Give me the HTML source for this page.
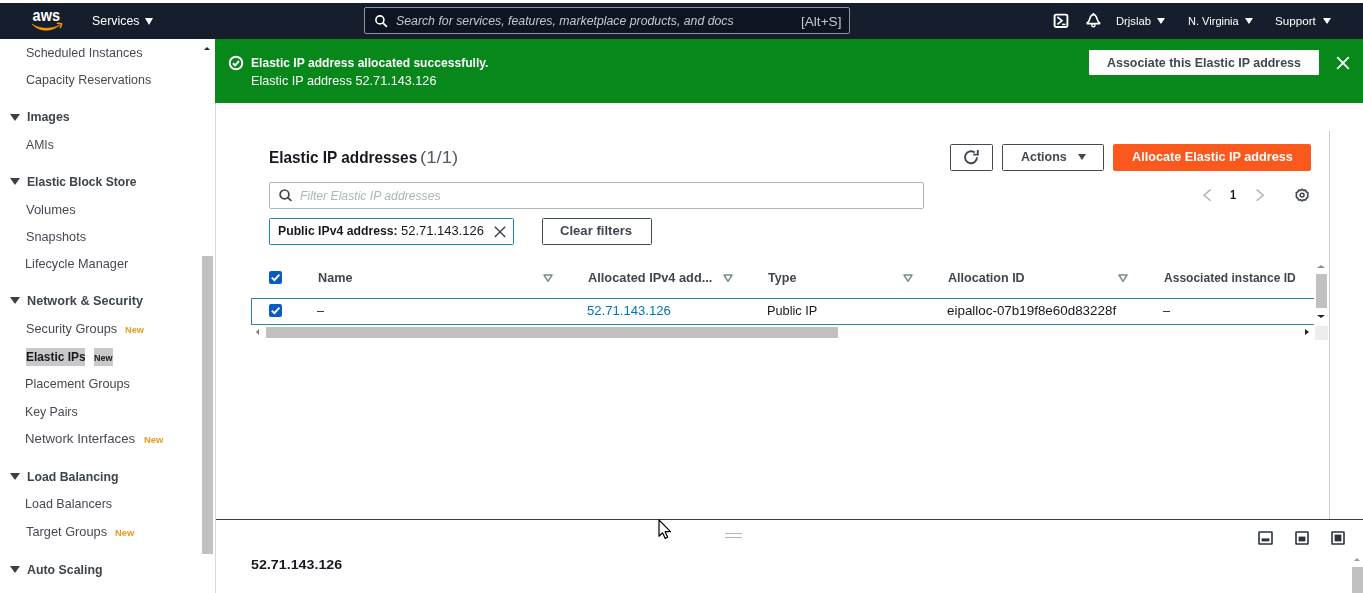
<!DOCTYPE html>
<html lang="en">
<head>
<meta charset="utf-8">
<title>Elastic IP addresses | EC2 Management Console</title>
<style>
*{box-sizing:border-box;margin:0;padding:0}
html,body{width:1363px;height:593px;overflow:hidden;background:#fff}
body{position:relative;font-family:"Liberation Sans",sans-serif;font-size:13px;color:#16191f}
.a{position:absolute}
.t{position:absolute;white-space:nowrap;line-height:16px;transform-origin:0 50%;z-index:5}
.tri{position:absolute;width:0;height:0;border-style:solid;border-color:transparent}
.btn{position:absolute;border:1px solid #434a54;border-radius:1.5px;background:#fff}
.cb{position:absolute;width:13px;height:13px;border-radius:2px;background:#0a5cc0}
.sort{position:absolute}
</style>
</head>
<body>
<!-- ===== top navigation ===== -->
<div class="a" style="left:0;top:3px;width:1363px;height:36.3px;background:#161e2d"></div>
<svg class="a" style="left:30px;top:9px" width="36" height="24" viewBox="0 0 36 24">
  <text x="2.6" y="11.8" font-family="Liberation Sans, sans-serif" font-size="16.5" font-weight="bold" fill="#fff" textLength="27.4" lengthAdjust="spacingAndGlyphs">aws</text>
  <path d="M2.2 15.2 C9.5 20.2 21 20.6 29.8 16 C21.4 23.2 9.2 23 2.2 15.2 Z" fill="#f90" stroke="#f90" stroke-width="0.6" stroke-linejoin="round"/>
  <path d="M27.4 14.3 L31.6 14.7 L30.4 18.6" fill="none" stroke="#f90" stroke-width="1.5" stroke-linejoin="round" stroke-linecap="round"/>
</svg>
<div class="tri" style="left:144.5px;top:17.8px;border-width:7.8px 4.7px 0 4.7px;border-top-color:#fff"></div>
<div class="a" style="left:364px;top:7px;width:486px;height:27px;border:1px solid #8d949e;border-radius:2px;background:#0e1421"></div>
<svg class="a" style="left:373.5px;top:13.5px" width="15" height="15" viewBox="0 0 15 15"><circle cx="5.9" cy="5.9" r="4" fill="none" stroke="#fff" stroke-width="1.6"/><path d="M8.9 8.9 L12.4 12.4" stroke="#fff" stroke-width="1.8" stroke-linecap="round"/></svg>
<svg class="a" style="left:1053px;top:12.6px" width="16" height="16" viewBox="0 0 16 16"><rect x="1.6" y="1.6" width="12.8" height="12.4" rx="1.5" fill="none" stroke="#fff" stroke-width="1.9"/><path d="M4.4 4 L9 7.7 L4.4 11.4" fill="none" stroke="#fff" stroke-width="1.7"/><path d="M9 11.4 H12.6" stroke="#fff" stroke-width="1.5"/></svg>
<svg class="a" style="left:1085px;top:12.2px" width="17" height="17" viewBox="0 0 17 17"><path d="M2.2 11 C4.6 9.4 4.6 7 5.4 5 C6 3.4 7.2 2.6 8.4 2.6 C9.6 2.6 10.8 3.4 11.4 5 C12.2 7 12.2 9.4 14.6 11 L14.6 11.6 H2.2 Z" fill="none" stroke="#fff" stroke-width="1.7" stroke-linejoin="round"/><path d="M8.4 1 V2.6" stroke="#fff" stroke-width="1.7"/><circle cx="8.4" cy="13.2" r="1.6" fill="none" stroke="#fff" stroke-width="1.4"/></svg>
<div class="tri" style="left:1156.6px;top:17.8px;border-width:6.4px 4.3px 0 4.3px;border-top-color:#fff"></div>
<div class="tri" style="left:1244.5px;top:17.8px;border-width:6.4px 4.3px 0 4.3px;border-top-color:#fff"></div>
<div class="tri" style="left:1322.8px;top:17.8px;border-width:6.4px 4.3px 0 4.3px;border-top-color:#fff"></div>

<!-- ===== sidebar ===== -->
<div class="a" style="left:0;top:39.3px;width:216px;height:554px;background:#fff;border-right:1px solid #d5dbdb"></div>
<div class="tri" style="left:9.5px;top:113.7px;border-width:7.8px 5.2px 0 5.2px;border-top-color:#3a4048"></div>
<div class="tri" style="left:9.5px;top:178.3px;border-width:7.8px 5.2px 0 5.2px;border-top-color:#3a4048"></div>
<div class="tri" style="left:9.5px;top:297.1px;border-width:7.8px 5.2px 0 5.2px;border-top-color:#3a4048"></div>
<div class="tri" style="left:9.5px;top:473.3px;border-width:7.8px 5.2px 0 5.2px;border-top-color:#3a4048"></div>
<div class="tri" style="left:9.5px;top:566.1px;border-width:7.8px 5.2px 0 5.2px;border-top-color:#3a4048"></div>
<div class="a" style="left:25.5px;top:348.3px;width:59.5px;height:18.2px;background:#c8c8c8"></div>
<div class="a" style="left:93.8px;top:348.3px;width:19.2px;height:18.2px;background:#c8c8c8"></div>
<div class="tri" style="left:203.8px;top:46.8px;border-width:0 3.6px 3.4px 3.6px;border-bottom-color:#222"></div>
<div class="a" style="left:202px;top:256px;width:10.6px;height:297.6px;background:#c1c1c1"></div>

<!-- ===== flash banner ===== -->
<div class="a" style="left:215px;top:39.3px;width:1148px;height:64px;background:#08881a"></div>
<svg class="a" style="left:228px;top:54.6px" width="16" height="16" viewBox="0 0 16 16"><circle cx="8" cy="8" r="6.3" fill="none" stroke="#fff" stroke-width="1.9"/><path d="M4.9 8.3 L7.1 10.4 L11 6" fill="none" stroke="#fff" stroke-width="1.9"/></svg>
<div class="a" style="left:1088.7px;top:49.8px;width:230.3px;height:25.4px;background:#fff;border-radius:1px"></div>
<svg class="a" style="left:1335.5px;top:56px" width="14" height="14" viewBox="0 0 14 14"><path d="M1.2 1.2 L12.8 12.8 M12.8 1.2 L1.2 12.8" stroke="#fff" stroke-width="1.8"/></svg>

<!-- ===== main content ===== -->
<div class="a" style="left:1329px;top:131px;width:1px;height:389px;background:#c9cccc"></div>
<!-- header buttons -->
<div class="btn" style="left:950px;top:144px;width:43px;height:27px"></div>
<svg class="a" style="left:963px;top:148.6px" width="17" height="16" viewBox="0 0 17 16"><path d="M14 8.2 A6 6 0 1 1 11.8 3.6" fill="none" stroke="#414750" stroke-width="1.9"/><path d="M14.8 1 V5.6 H10.2" fill="none" stroke="#414750" stroke-width="1.9" stroke-linejoin="miter"/></svg>
<div class="btn" style="left:1002px;top:144px;width:102px;height:27px"></div>
<div class="tri" style="left:1077.5px;top:153.6px;border-width:6.8px 4.6px 0 4.6px;border-top-color:#414750"></div>
<div class="a" style="left:1113px;top:144px;width:198.2px;height:26.6px;background:#fb581e;border-radius:2px"></div>
<!-- filter input -->
<div class="a" style="left:269px;top:182px;width:655px;height:27px;border:1px solid #aab7b8;border-radius:2px;background:#fff"></div>
<svg class="a" style="left:278px;top:188px" width="15" height="15" viewBox="0 0 15 15"><circle cx="6.5" cy="6.4" r="4.4" fill="none" stroke="#414750" stroke-width="1.7"/><path d="M9.7 9.6 L12.9 12.4" stroke="#414750" stroke-width="1.8" stroke-linecap="round"/></svg>
<!-- pagination -->
<svg class="a" style="left:1202px;top:188px" width="12" height="15" viewBox="0 0 12 15"><path d="M8.6 1.6 L2 7.2 L8.6 12.8" fill="none" stroke="#aab7b8" stroke-width="1.5"/></svg>
<svg class="a" style="left:1254px;top:188px" width="12" height="15" viewBox="0 0 12 15"><path d="M2.6 1.6 L9.2 7.2 L2.6 12.8" fill="none" stroke="#aab7b8" stroke-width="1.5"/></svg>
<svg class="a" style="left:1295px;top:188px" width="14.2" height="14.2" viewBox="0 0 16 16"><path d="M8 1.4 L9.6 2.7 L11.8 2.4 L12.7 4.3 L14.6 5.3 L14.2 7.4 L14.6 8.6 L14.2 10.7 L12.7 11.7 L11.8 13.6 L9.6 13.3 L8 14.6 L6.4 13.3 L4.2 13.6 L3.3 11.7 L1.8 10.7 L1.4 8.6 L1.8 7.4 L1.4 5.3 L3.3 4.3 L4.2 2.4 L6.4 2.7 Z" fill="none" stroke="#414750" stroke-width="1.8" stroke-linejoin="round"/><circle cx="8" cy="8" r="2.2" fill="none" stroke="#414750" stroke-width="1.7"/></svg>
<!-- token -->
<div class="a" style="left:269px;top:218px;width:245px;height:27px;border:1px solid #1d86a2;border-radius:1.5px;background:#fff"></div>
<svg class="a" style="left:494px;top:225.8px" width="12" height="12" viewBox="0 0 12 12"><path d="M0.8 0.8 L11.2 11 M11.2 0.8 L0.8 11" stroke="#414750" stroke-width="1.5"/></svg>
<div class="btn" style="left:542px;top:218px;width:110px;height:27px"></div>
<!-- table header -->
<div class="cb" style="left:269px;top:271px"><svg width="13" height="13" viewBox="0 0 13 13"><path d="M2.8 6.6 L5.4 9.2 L10.4 3.6" fill="none" stroke="#fff" stroke-width="1.9"/></svg></div>
<svg class="sort" style="left:542.6px;top:273.8px" width="10" height="9" viewBox="0 0 10 9"><path d="M1 1.1 H9 L5 7.4 Z" fill="none" stroke="#7a8a8c" stroke-width="1.5" stroke-linejoin="round"/></svg>
<svg class="sort" style="left:722.6px;top:273.8px" width="10" height="9" viewBox="0 0 10 9"><path d="M1 1.1 H9 L5 7.4 Z" fill="none" stroke="#7a8a8c" stroke-width="1.5" stroke-linejoin="round"/></svg>
<svg class="sort" style="left:902.6px;top:273.8px" width="10" height="9" viewBox="0 0 10 9"><path d="M1 1.1 H9 L5 7.4 Z" fill="none" stroke="#7a8a8c" stroke-width="1.5" stroke-linejoin="round"/></svg>
<svg class="sort" style="left:1118.4px;top:273.8px" width="10" height="9" viewBox="0 0 10 9"><path d="M1 1.1 H9 L5 7.4 Z" fill="none" stroke="#7a8a8c" stroke-width="1.5" stroke-linejoin="round"/></svg>
<!-- selected row -->
<div class="a" style="left:251px;top:298px;width:1063px;height:27px;border:1px solid #27899b;border-right:0;background:#fff"></div>
<div class="cb" style="left:269px;top:304px"><svg width="13" height="13" viewBox="0 0 13 13"><path d="M2.8 6.6 L5.4 9.2 L10.4 3.6" fill="none" stroke="#fff" stroke-width="1.9"/></svg></div>
<!-- table scrollbars -->
<div class="tri" style="left:256.4px;top:329.2px;border-width:3.3px 3.8px 3.3px 0;border-right-color:#777"></div>
<div class="a" style="left:266.2px;top:327.2px;width:571.8px;height:10.5px;background:#c1c1c1"></div>
<div class="tri" style="left:1305.1px;top:328.6px;border-width:3.8px 0 3.8px 4px;border-left-color:#222"></div>
<div class="a" style="left:1314.6px;top:325.5px;width:13px;height:14px;background:#ededed"></div>
<div class="tri" style="left:1317.2px;top:265px;border-width:0 4px 3.8px 4px;border-bottom-color:#8c8c8c"></div>
<div class="a" style="left:1315.8px;top:274.3px;width:10.8px;height:34.1px;background:#c1c1c1"></div>
<div class="tri" style="left:1317.2px;top:315px;border-width:3.8px 4px 0 4px;border-top-color:#222"></div>

<!-- ===== split panel ===== -->
<div class="a" style="left:216px;top:519px;width:1147px;height:1.2px;background:#353e40"></div>
<div class="a" style="left:724.5px;top:533px;width:17.5px;height:1px;background:#aab7b8"></div>
<div class="a" style="left:724.5px;top:536.6px;width:17.5px;height:1px;background:#aab7b8"></div>
<svg class="a" style="left:657.9px;top:519px" width="14" height="22" viewBox="0 0 14 22"><path d="M1 1 V17.2 L4.6 13.8 L7.2 19.4 L9.7 18.3 L7.1 12.7 H12.5 Z" fill="#fff" stroke="#000" stroke-width="1.2" stroke-linejoin="round"/></svg>
<svg class="a" style="left:1258px;top:531px" width="15" height="14" viewBox="0 0 15 14"><rect x="1" y="1" width="13" height="12" rx="0.4" fill="none" stroke="#2b333d" stroke-width="1.6"/><rect x="3.6" y="7.4" width="7.8" height="3" fill="#2b333d"/></svg>
<svg class="a" style="left:1295px;top:531px" width="14" height="14" viewBox="0 0 14 14"><rect x="1" y="1" width="12" height="12" rx="0.4" fill="none" stroke="#2b333d" stroke-width="1.6"/><rect x="3.6" y="5.6" width="6.8" height="4.8" fill="#2b333d"/></svg>
<svg class="a" style="left:1331px;top:531px" width="14" height="14" viewBox="0 0 14 14"><rect x="1" y="1" width="12" height="12" rx="0.4" fill="none" stroke="#2b333d" stroke-width="1.6"/><rect x="3.6" y="3.6" width="6.8" height="6.8" fill="#2b333d"/></svg>
<!-- page scrollbar stub -->
<div class="tri" style="left:1354.3px;top:558.2px;border-width:0 3.4px 3.8px 3.4px;border-bottom-color:#999"></div>
<div class="a" style="left:1352.2px;top:567.2px;width:10.8px;height:26px;background:#c1c1c1"></div>

<!-- ===== text layer ===== -->
<div class="a" style="left:0;top:0;width:1363px;height:593px;overflow:hidden;will-change:transform;z-index:5">
<span class="t" id="n_services" style="left:91.75px;top:12.6px;font-size:12.7px;transform:scaleX(0.9758);color:#fff">Services</span>
<span class="t" id="n_search" style="left:396.30px;top:13.2px;font-size:12px;transform:scaleX(1.0247);color:#c5c9ce;font-style:italic">Search for services, features, marketplace products, and docs</span>
<span class="t" id="n_alt" style="left:800.55px;top:13.7px;font-size:12.5px;transform:scaleX(1.0881);color:#c5c9ce">[Alt+S]</span>
<span class="t" id="n_user" style="left:1116.15px;top:13.0px;font-size:11.5px;transform:scaleX(0.9768);color:#fff">Drjslab</span>
<span class="t" id="n_region" style="left:1187.75px;top:13.0px;font-size:11.5px;transform:scaleX(0.9596);color:#fff">N. Virginia</span>
<span class="t" id="n_support" style="left:1275.35px;top:13.0px;font-size:11.5px;transform:scaleX(1.0127);color:#fff">Support</span>
<span class="t" id="s1" style="left:25.55px;top:44.5px;font-size:13px;transform:scaleX(0.9653);color:#454a52">Scheduled Instances</span>
<span class="t" id="s2" style="left:26.05px;top:71.5px;font-size:13px;transform:scaleX(0.9623);color:#454a52">Capacity Reservations</span>
<span class="t" id="s3" style="left:26.55px;top:108.5px;font-size:13px;transform:scaleX(0.9540);color:#3d444c;font-weight:bold">Images</span>
<span class="t" id="s4" style="left:26.45px;top:137.0px;font-size:13px;transform:scaleX(0.9397);color:#454a52">AMIs</span>
<span class="t" id="s5" style="left:26.55px;top:173.7px;font-size:13px;transform:scaleX(0.9305);color:#3d444c;font-weight:bold">Elastic Block Store</span>
<span class="t" id="s6" style="left:25.95px;top:201.5px;font-size:13px;transform:scaleX(1.0000);color:#454a52">Volumes</span>
<span class="t" id="s7" style="left:25.95px;top:228.5px;font-size:13px;transform:scaleX(0.9768);color:#454a52">Snapshots</span>
<span class="t" id="s8" style="left:25.20px;top:255.7px;font-size:13px;transform:scaleX(0.9784);color:#454a52">Lifecycle Manager</span>
<span class="t" id="s9" style="left:26.75px;top:292.5px;font-size:13px;transform:scaleX(0.9725);color:#3d444c;font-weight:bold">Network &amp; Security</span>
<span class="t" id="s10" style="left:25.95px;top:320.5px;font-size:13px;transform:scaleX(0.9777);color:#454a52">Security Groups</span>
<span class="t" id="s10n" style="left:124.50px;top:321.9px;font-size:9.5px;transform:scaleX(0.9659);color:#ec9a1e;font-weight:bold">New</span>
<span class="t" id="s11" style="left:25.95px;top:348.5px;font-size:13px;transform:scaleX(0.9153);color:#16191f;font-weight:bold">Elastic IPs</span>
<span class="t" id="s11n" style="left:93.50px;top:349.9px;font-size:9.5px;transform:scaleX(0.9474);color:#16191f;font-weight:bold">New</span>
<span class="t" id="s12" style="left:25.20px;top:376.2px;font-size:13px;transform:scaleX(0.9746);color:#454a52">Placement Groups</span>
<span class="t" id="s13" style="left:24.80px;top:403.5px;font-size:13px;transform:scaleX(0.9456);color:#454a52">Key Pairs</span>
<span class="t" id="s14" style="left:24.80px;top:430.5px;font-size:13px;transform:scaleX(1.0168);color:#454a52">Network Interfaces</span>
<span class="t" id="s14n" style="left:143.70px;top:431.9px;font-size:9.5px;transform:scaleX(0.9896);color:#ec9a1e;font-weight:bold">New</span>
<span class="t" id="s15" style="left:26.95px;top:468.8px;font-size:13px;transform:scaleX(0.9444);color:#3d444c;font-weight:bold">Load Balancing</span>
<span class="t" id="s16" style="left:24.80px;top:496.2px;font-size:13px;transform:scaleX(0.9639);color:#454a52">Load Balancers</span>
<span class="t" id="s17" style="left:26.05px;top:523.5px;font-size:13px;transform:scaleX(0.9847);color:#454a52">Target Groups</span>
<span class="t" id="s17n" style="left:115.30px;top:524.9px;font-size:9.5px;transform:scaleX(0.9922);color:#ec9a1e;font-weight:bold">New</span>
<span class="t" id="s18" style="left:26.70px;top:561.5px;font-size:13px;transform:scaleX(0.9514);color:#3d444c;font-weight:bold">Auto Scaling</span>
<span class="t" id="s19" style="left:24.80px;top:590.1px;font-size:13px;transform:scaleX(0.9700);color:#454a52">Launch Configurations</span>
<span class="t" id="f1" style="left:250.75px;top:54.9px;font-size:13px;transform:scaleX(0.9300);color:#fff;font-weight:bold">Elastic IP address allocated successfully.</span>
<span class="t" id="f2" style="left:251.00px;top:72.5px;font-size:13px;transform:scaleX(0.9730);color:#fff">Elastic IP address 52.71.143.126</span>
<span class="t" id="f3" style="left:1106.90px;top:54.5px;font-size:13px;transform:scaleX(0.9561);color:#414750;font-weight:bold">Associate this Elastic IP address</span>
<span class="t" id="m_title" style="left:268.60px;top:149.2px;font-size:16.5px;transform:scaleX(0.9302);color:#16191f;font-weight:bold">Elastic IP addresses</span>
<span class="t" id="m_count" style="left:420.40px;top:149.2px;font-size:16.5px;transform:scaleX(1.1235);color:#545b64">(1/1)</span>
<span class="t" id="m_actions" style="left:1020.50px;top:148.9px;font-size:13px;transform:scaleX(0.9591);color:#414750;font-weight:bold">Actions</span>
<span class="t" id="m_alloc" style="left:1131.50px;top:148.9px;font-size:13px;transform:scaleX(0.9732);color:#fff;font-weight:bold">Allocate Elastic IP address</span>
<span class="t" id="m_ph" style="left:299.90px;top:187.6px;font-size:12.5px;transform:scaleX(0.9762);color:#aab7b8;font-style:italic">Filter Elastic IP addresses</span>
<span class="t" id="m_tok1" style="left:278.35px;top:222.5px;font-size:13px;transform:scaleX(0.9409);color:#16191f;font-weight:bold">Public IPv4 address:</span>
<span class="t" id="m_tok2" style="left:401.15px;top:222.5px;font-size:13px;transform:scaleX(0.9976);color:#16191f">52.71.143.126</span>
<span class="t" id="m_clear" style="left:560.30px;top:222.9px;font-size:13px;transform:scaleX(1.0071);color:#414750;font-weight:bold">Clear filters</span>
<span class="t" id="m_pg" style="left:1229.95px;top:186.7px;font-size:12.5px;transform:scaleX(0.8800);color:#16191f;font-weight:bold">1</span>
<span class="t" id="h_name" style="left:318.15px;top:269.6px;font-size:12.7px;transform:scaleX(0.9985);color:#414750;font-weight:bold">Name</span>
<span class="t" id="h_ip" style="left:587.90px;top:269.6px;font-size:12.7px;transform:scaleX(1.0082);color:#414750;font-weight:bold">Allocated IPv4 add...</span>
<span class="t" id="h_type" style="left:767.80px;top:269.6px;font-size:12.7px;transform:scaleX(0.9894);color:#414750;font-weight:bold">Type</span>
<span class="t" id="h_alloc" style="left:947.70px;top:269.6px;font-size:12.7px;transform:scaleX(0.9889);color:#414750;font-weight:bold">Allocation ID</span>
<span class="t" id="h_inst" style="left:1163.50px;top:269.6px;font-size:12.7px;transform:scaleX(0.9482);color:#414750;font-weight:bold">Associated instance ID</span>
<span class="t" id="r_name" style="left:317.20px;top:302.6px;font-size:12.6px;transform:scaleX(0.9999);color:#16191f">–</span>
<span class="t" id="r_ip" style="left:586.95px;top:302.6px;font-size:12.6px;transform:scaleX(1.0416);color:#0073bb">52.71.143.126</span>
<span class="t" id="r_type" style="left:766.60px;top:302.6px;font-size:12.6px;transform:scaleX(1.0125);color:#16191f">Public IP</span>
<span class="t" id="r_alloc" style="left:946.90px;top:302.6px;font-size:12.6px;transform:scaleX(1.0640);color:#16191f">eipalloc-07b19f8e60d83228f</span>
<span class="t" id="r_inst" style="left:1163.40px;top:302.6px;font-size:12.6px;transform:scaleX(0.9999);color:#16191f">–</span>
<span class="t" id="b_ip" style="left:250.50px;top:557.4px;font-size:13.5px;transform:scaleX(1.0563);color:#16191f;font-weight:bold">52.71.143.126</span>
</div>
</body>
</html>
